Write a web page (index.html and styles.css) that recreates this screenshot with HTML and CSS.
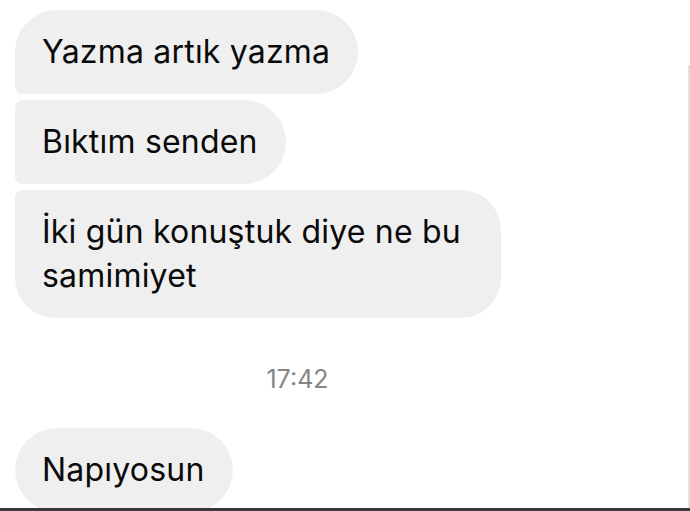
FILE: index.html
```html
<!DOCTYPE html>
<html lang="tr">
<head>
  <meta charset="UTF-8" />
  <meta name="viewport" content="width=device-width, initial-scale=1.0" />
  <title>Mesajlar</title>
  <link rel="stylesheet" href="styles.css">
</head>
<body>
  <div class="thread">
    <div class="group">
      <div class="bubble first">Yazma artık yazma</div>
      <div class="bubble middle">Bıktım senden</div>
      <div class="bubble last">İki gün konuştuk diye ne bu<br>samimiyet</div>
    </div>

    <div class="stamp">17:42</div>

    <div class="group">
      <div class="bubble">Napıyosun</div>
    </div>
  </div>
</body>
</html>
```

FILE: styles.css
```css
* {
  box-sizing: border-box;
}

html, body {
  margin: 0;
  height: 100%;
  background: #fff;
}

body {
  font-family: "Inter", "Liberation Sans", sans-serif;
  color: #0a0a0a;
  overflow: hidden;
  position: relative;
}

/* edge of the scroll area on the right */
body::before {
  content: "";
  position: absolute;
  right: 0;
  top: 65px;
  bottom: 0;
  width: 2px;
  background: #e2e2e2;
}

/* bottom bar over the list */
body::after {
  content: "";
  position: absolute;
  left: 0;
  right: 0;
  bottom: 0;
  height: 3px;
  background: #3a3a3a;
}

.thread {
  padding: 10px 0 0 15px;
  display: flex;
  flex-direction: column;
}

.group {
  display: flex;
  flex-direction: column;
  align-items: flex-start;
  gap: 6px;
}

.bubble {
  background: #efefef;
  border-radius: 42px;
  padding: 20px 28px 20px 27px;
  font-size: 32px;
  line-height: 44px;
  letter-spacing: 0.2px;
}

.bubble.first {
  border-bottom-left-radius: 8px;
}

.bubble.middle {
  border-top-left-radius: 8px;
  border-bottom-left-radius: 8px;
}

/* wrapped bubble keeps its wider wrap box */
.bubble.last {
  border-radius: 8px 40px 40px 40px;
  padding-right: 40px;
}

.stamp {
  text-align: center;
  padding-right: 110px;
  font-size: 25px;
  color: #858585;
  margin: 46px 0 34px;
  line-height: 30px;
}
```
